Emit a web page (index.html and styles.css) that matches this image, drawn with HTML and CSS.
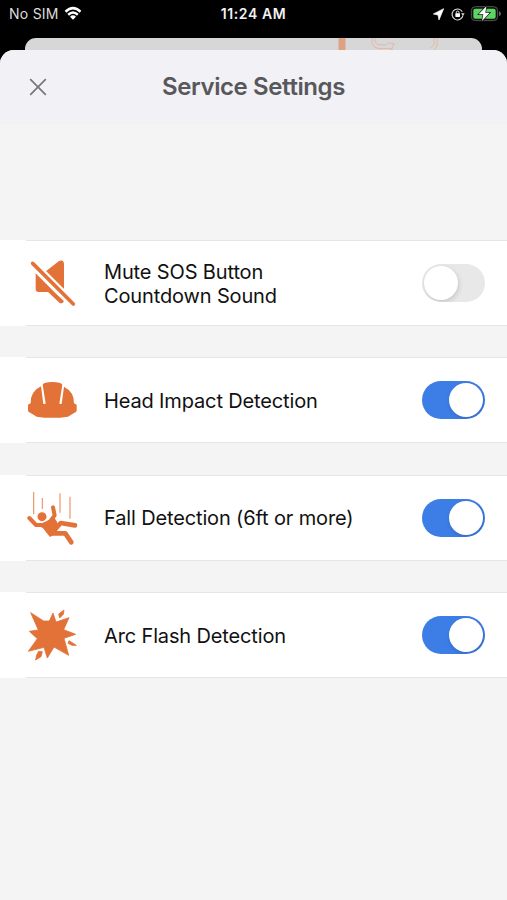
FILE: index.html
```html
<!DOCTYPE html>
<html lang="en">
<head>
<meta charset="utf-8">
<title>Service Settings</title>
<link rel="stylesheet" href="styles.css">
</head>
<body>
<div class="phone">
  <header class="status">
    <div class="carrier"><span>No SIM</span>
      <svg class="wifi" viewBox="0 0 54 42"><path d="M2 14Q27-9 52 14L47 20Q27 1 7 20ZM10 23Q27 8 44 23L39 29Q27 18 15 29ZM18 32Q27 24 36 32L27 41Z"/></svg>
    </div>
    <div class="clock">11:24 AM</div>
    <svg class="indicators" viewBox="0 0 246 90">
      <path fill="#fff" stroke="#fff" stroke-width="2" stroke-linejoin="round" d="M56 26L25 42L39 45L42 60Z"/>
      <path fill="none" stroke="#ddd" stroke-width="3.2" d="M112 35A16.500 16.500 0 1 0 114 46"/>
      <path fill="#ddd" d="M108 40H119L114 47Z"/>
      <rect x="91" y="40" width="14" height="11" rx="2" fill="#fff"/>
      <path fill="none" stroke="#fff" stroke-width="2.500" d="M94 41V37a4 4 0 0 1 8 0V41"/>
      <rect x="139" y="20" width="79" height="42" rx="12" fill="#111" stroke="#555" stroke-width="3"/>
      <rect x="145" y="26" width="67" height="30" rx="6" fill="#5bd663"/>
      <path fill="#666" d="M222 34q6 2 6 7t-6 7z"/>
      <path fill="#fff" stroke="#111" stroke-width="4" paint-order="stroke" d="M184 19L161 43H175L171 63L194 38H181Z"/>
    </svg>
  </header>
  <div class="backdrop">
    <svg viewBox="0 0 457 13" preserveAspectRatio="none">
      <rect x="313.500" width="7" height="13" fill="#dfa182"/>
      <g fill="none" stroke="#e3b8a4" stroke-width="1">
        <path d="M347 0v5l2 4 4 2h12l3 1"/>
        <path d="M350 0v4l3 3h8l3-2 5 1-1 3-3 4"/>
        <path d="M409 0v7l-4 4M412 0v8l-3 5"/>
      </g>
    </svg>
  </div>
  <main class="sheet">
    <div class="titlebar">
      <svg class="close" viewBox="0 0 18 18"><path d="M1.200 1.200L16.800 16.800M16.800 1.200L1.200 16.800"/></svg>
      <h1>Service Settings</h1>
    </div>
    <section class="list">
      <div class="row">
        <svg class="icon" viewBox="0 -30 240 258">
          <path d="M85 70L132 33Q146 28 147 42V118ZM62 70L124 132L146 152Q146 161 135 160L99 126H70Q62 125 62 117V80Z"/>
          <path class="cut" d="M53 40L176 163"/>
          <path class="slash" d="M53 40L175 162"/>
        </svg>
        <span class="label">Mute SOS Button<br>Countdown Sound</span>
        <span class="toggle"></span>
      </div>
      <div class="row">
        <svg class="icon" viewBox="0 -24 240 258">
          <path d="M47 115Q46 79 78 64L85 117L92 116L83 59Q86 52 112 51Q138 52 142 59L133 116L140 117L147 65Q178 81 177 115L185 119V137Q185 141 177 144L159 155Q112 162 65 155L47 144Q39 141 39 137V119Z"/>
        </svg>
        <span class="label">Head Impact Detection</span>
        <span class="toggle on"></span>
      </div>
      <div class="row">
        <svg class="icon" viewBox="0 -22 240 258">
          <path class="air" d="M56 29V96M82 47V80M135 33V91M165 43V109"/>
          <circle cx="81" cy="103" r="13.500"/>
          <path d="M68 128L84 122L100 117L116 103L126 118L130 134L123 153L105 164Q94 151 84 138Z"/>
          <path class="limb" d="M43 107L63 128L84 128L105 118L119 99L114 75"/>
          <path class="leg" d="M120 141L137 122L180 129M110 153L151 153L169 180"/>
        </svg>
        <span class="label">Fall Detection (6ft or more)</span>
        <span class="toggle on"></span>
      </div>
      <div class="row">
        <svg class="icon" viewBox="0 -24 240 258">
          <path class="burst" d="M47 38L86 63L103 63L114 39L123 66L162 53L146 89L182 103L147 115L161 166L117 141L97 174L87 142L40 154L67 116L43 94L70 90ZM131 42L147 30L145 43L134 54ZM162 122L184 136H171L159 130ZM71 154L82 155L78 170L62 180L65 165Z"/>
        </svg>
        <span class="label">Arc Flash Detection</span>
        <span class="toggle on"></span>
      </div>
    </section>
  </main>
</div>
</body>
</html>
```
FILE: styles.css
```css
* { box-sizing: border-box; }
body { margin: 0; font-family: Inter, "Liberation Sans", sans-serif; }
.phone { width: 507px; height: 900px; background: #000; overflow: hidden; display: flex; flex-direction: column; }
.status { height: 37.5px; flex: none; display: grid; grid-template-columns: 1fr auto 1fr; color: #fff; }
.carrier { display: flex; padding: 5px 0 0 9px; gap: 5px; font-size: 14px; line-height: 18px; color: #ddd; letter-spacing: 0.25px; }
.wifi { width: 18px; height: 14px; margin-top: 1px; fill: #fff; }
.clock { padding-top: 5px; font-size: 14px; line-height: 18px; font-weight: 600; letter-spacing: 0.6px; color: #f2f2f2; }
.indicators { width: 82px; height: 30px; justify-self: end; }
.backdrop { flex: none; height: 12.5px; margin: 0 25px; border-radius: 11px 11px 0 0; background: #d7d7d7; overflow: hidden; }
.backdrop svg { display: block; width: 100%; height: 100%; }
.sheet { flex: 1; background: #f4f4f4; border-radius: 14px 14px 0 0; overflow: hidden; }
.titlebar { height: 74px; background: #f1f1f6; display: grid; grid-template-columns: 76px 1fr 76px; align-items: center; }
.close { width: 18px; height: 18px; margin-left: 28.5px; fill: none; stroke: #77777b; stroke-width: 1.7; }
h1 { margin: 0; text-align: center; font-size: 24px; line-height: 30px; font-weight: 600; color: #58585c; letter-spacing: -0.4px; }
.list { margin-top: 116px; display: flex; flex-direction: column; gap: 31.3px; }
.row { height: 86px; display: flex; align-items: center; padding: 0 22px 0 15px; background: linear-gradient(#e6e6e6, #e6e6e6) 26px 0 / 100% 1px no-repeat, linear-gradient(#e6e6e6, #e6e6e6) 26px 100% / 100% 1px no-repeat, #fff; }
.icon { width: 80px; height: 86px; flex: none; fill: #e27238; }
.icon .cut { stroke: #fff; stroke-width: 24; }
.icon .slash { stroke: #e27238; stroke-width: 11; stroke-linecap: round; }
.icon .air { fill: none; stroke: #e27238; stroke-width: 3.5; opacity: 0.75; }
.icon .limb, .icon .leg { fill: none; stroke: #e27238; stroke-width: 12; stroke-linecap: round; stroke-linejoin: round; }
.icon .leg { stroke-width: 14; }
.icon .burst { stroke: #e27238; stroke-width: 2.5; stroke-linejoin: round; }
.label { flex: 1; margin-left: 9px; padding-top: 2px; font-size: 20px; line-height: 24.5px; color: #111; letter-spacing: -0.14px; }
.toggle { width: 63px; height: 38px; border-radius: 19px; background: #e8e8e8; padding: 2px; display: flex; overflow: hidden; }
.toggle::before { content: ""; width: 34px; height: 34px; border-radius: 50%; background: #fff; box-shadow: 1px 2px 5px rgba(0, 0, 0, 0.15); }
.toggle.on { background: #3d7de6; justify-content: flex-end; }
```
